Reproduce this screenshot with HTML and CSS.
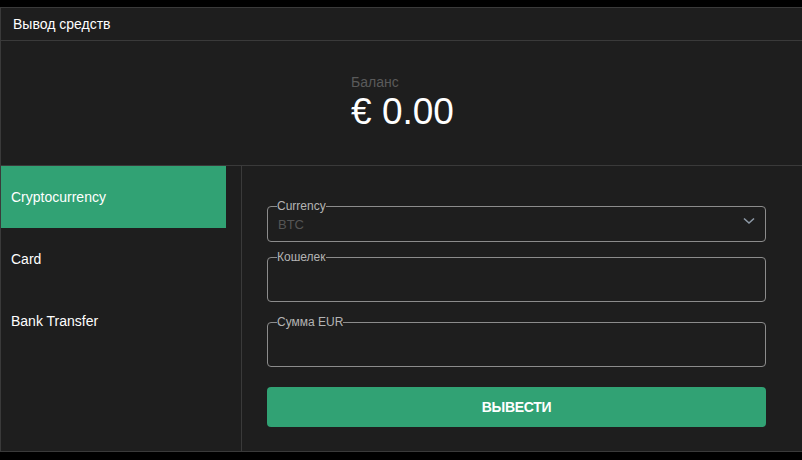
FILE: index.html
```html
<!DOCTYPE html>
<html lang="ru">
<head>
    <meta charset="UTF-8">
    <meta name="viewport" content="width=device-width, initial-scale=1.0">
    <title>Вывод средств</title>
    <link rel="stylesheet" href="styles.css">
</head>
<body>
    <div class="panel">
        <!-- Header -->
        <div class="panel-header">Вывод средств</div>

        <!-- Balance -->
        <div class="balance">
            <div class="balance-inner">
                <div class="balance-label">Баланс</div>
                <div class="balance-value">€ 0.00</div>
            </div>
        </div>

        <div class="panel-body">
            <!-- Methods -->
            <div class="methods">
                <div class="method active">Cryptocurrency</div>
                <div class="method">Card</div>
                <div class="method">Bank Transfer</div>
            </div>

            <!-- Form -->
            <div class="form">
                <fieldset class="field field-select">
                    <legend>Currency</legend>
                    <div class="select">
                        <span class="placeholder">BTC</span>
                        <svg class="chevron" width="12" height="8" viewBox="0 0 12 8">
                            <polyline points="1,1.5 6,6 11,1.5" fill="none" stroke="#8d99a6" stroke-width="1.6"/>
                        </svg>
                    </div>
                </fieldset>
                <fieldset class="field field-wallet">
                    <legend>Кошелек</legend>
                    <input class="input" type="text">
                </fieldset>
                <fieldset class="field field-amount">
                    <legend>Сумма EUR</legend>
                    <input class="input" type="text">
                </fieldset>
                <button class="btn">ВЫВЕСТИ</button>
            </div>
        </div>
    </div>
</body>
</html>
```

FILE: styles.css
```css
body {
    margin: 0;
    padding-top: 7px;
    background: #000;
    font-family: "Liberation Sans", Arial, sans-serif;
    color: #fff;
    overflow: hidden;
}

.panel {
    background: #1e1e1e;
    border: 1px solid #3a3a3a;
    margin-right: -1px;
}

.panel-header {
    font-size: 14px;
    line-height: 16px;
    padding: 8px 12px;
    border-bottom: 1px solid #3a3a3a;
}

/* Balance block */
.balance {
    height: 124px;
    display: flex;
    justify-content: center;
    border-bottom: 1px solid #3a3a3a;
}

.balance-inner {
    padding-top: 33px;
    padding-left: 2px;
}

.balance-label {
    font-size: 14px;
    line-height: 16px;
    color: #5a5a5a;
}

.balance-value {
    font-size: 37px;
    line-height: 40px;
    margin-top: 2px;
}

/* Body */
.panel-body {
    display: flex;
}

.methods {
    width: 241px;
    flex-shrink: 0;
    padding-right: 15px;
    box-sizing: border-box;
    border-right: 1px solid #3a3a3a;
}

.method {
    height: 62px;
    line-height: 62px;
    padding-left: 10px;
    font-size: 14px;
}

.method.active {
    background: #31a274;
}

.form {
    flex: 1;
    padding: 33px 36px 24px 25px;
}

/* Fields */
.field {
    margin: 0;
    padding: 0 9px;
    border: 1px solid #8c8c8c;
    border-radius: 4px;
    min-width: 0;
}

.field legend {
    padding: 0;
    font-size: 12px;
    line-height: 14px;
    color: #b4b4b4;
}

.field-select {
    padding-bottom: 6px;
    margin-bottom: 8px;
}

.field-wallet {
    margin-bottom: 13px;
}

.field-amount {
    margin-bottom: 20px;
}

.select {
    height: 22px;
    display: flex;
    align-items: center;
    justify-content: space-between;
    padding-left: 1px;
    padding-right: 1px;
}

.placeholder {
    font-size: 13px;
    color: #555;
}

.chevron {
    display: block;
    margin-top: -7px;
}

.input {
    display: block;
    width: 100%;
    height: 37px;
    border: none;
    background: transparent;
    outline: none;
    padding: 0;
    color: #fff;
    font-family: inherit;
}

.btn {
    display: block;
    width: 100%;
    height: 40px;
    border: none;
    border-radius: 4px;
    background: #31a274;
    color: #fff;
    font-family: inherit;
    font-size: 14px;
    font-weight: bold;
    letter-spacing: -0.3px;
    cursor: pointer;
}
```
